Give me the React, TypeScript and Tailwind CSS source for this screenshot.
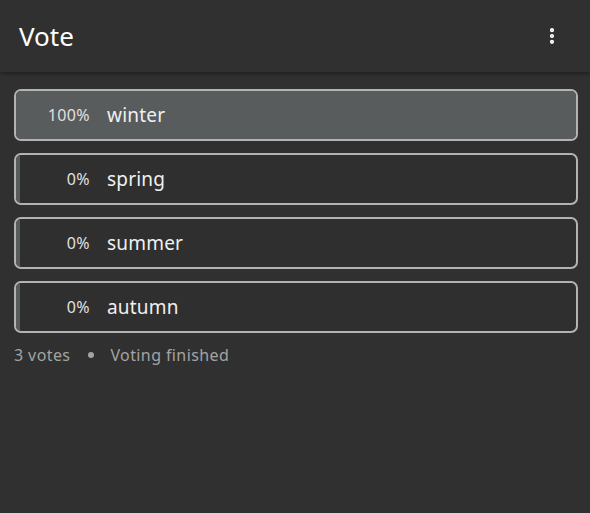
import { EllipsisVertical } from "lucide-react";

type Option = { label: string; pct: number };

const options: Option[] = [
  { label: "winter", pct: 100 },
  { label: "spring", pct: 0 },
  { label: "summer", pct: 0 },
  { label: "autumn", pct: 0 },
];

function OptionRow({ option }: { option: Option }) {
  return (
    <div className="relative h-[52px] overflow-hidden rounded-[7px] border-2 border-[#b3b3b3] bg-[#2f2f2f]">
      <div
        className="absolute inset-y-0 left-0 min-w-[4px] bg-[#585c5d]"
        style={{ width: `${option.pct}%` }}
      />
      <div className="relative flex h-full items-center">
        <span className="w-[74px] text-right text-[16px] tracking-[0.4px] text-[#e0e0e0]">
          {option.pct}%
        </span>
        <span className="ml-[17px] text-[19px] tracking-[0.2px] text-[#f0f0f0]">
          {option.label}
        </span>
      </div>
    </div>
  );
}

export default function App() {
  return (
    <div
      className="flex h-[513px] w-[590px] flex-col bg-[#303030] text-white"
      style={{ fontFamily: '"Noto Sans", "Open Sans", sans-serif' }}
    >
      <header className="flex h-[72px] shrink-0 items-center justify-between bg-[#303030] pl-[19px] pr-[28px] shadow-[0_2px_4px_rgba(0,0,0,0.35)]">
        <h1 className="text-[26px] leading-none text-white">Vote</h1>
        <EllipsisVertical className="size-5 text-white" strokeWidth={3} />
      </header>
      <div className="flex flex-col gap-3 pl-[14px] pr-[12px] pt-[17px]">
        {options.map((o) => (
          <OptionRow key={o.label} option={o} />
        ))}
        <div className="-mt-[2px] flex items-center text-[16px] tracking-[0.4px] text-[#a3a3a3]">
          <span>3 votes</span>
          <span className="ml-[18px] mr-[16px] inline-block size-[6px] rounded-full bg-[#a3a3a3]" />
          <span>Voting finished</span>
        </div>
      </div>
    </div>
  );
}
